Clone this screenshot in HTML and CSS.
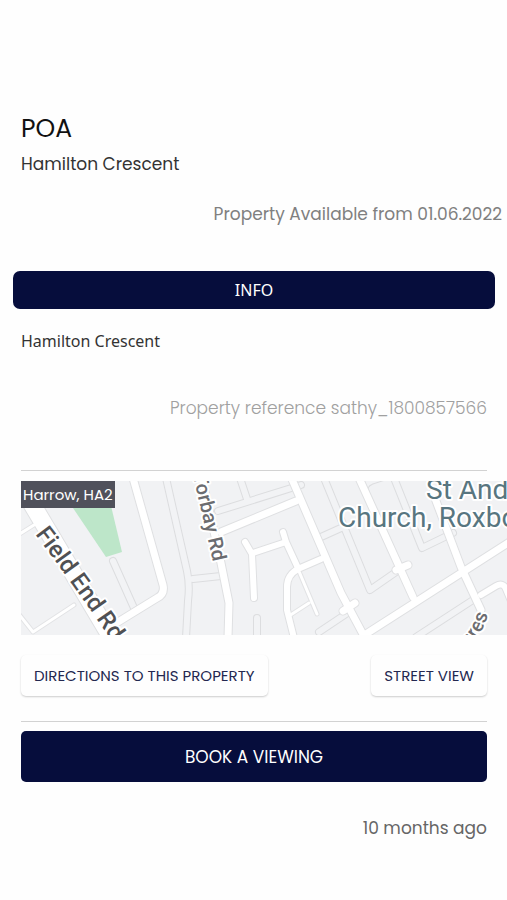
FILE: index.html
```
<!DOCTYPE html>
<html lang="en">
<head>
    <meta charset="UTF-8">
    <meta name="viewport" content="width=device-width, initial-scale=1.0">
    <title>Hamilton Crescent</title>
    <link rel="stylesheet" href="styles.css">
</head>
<body>
    <main class="property">
        <h1 class="price">POA</h1>
        <p class="address">Hamilton Crescent</p>
        <p class="available">Property Available from 01.06.2022</p>

        <button type="button" class="info-btn">INFO</button>
        <p class="description">Hamilton Crescent</p>
        <p class="reference">Property reference sathy_1800857566</p>

        <hr>

        <div class="map">
            <span class="map-label">Harrow, HA2</span>
            <svg class="map-img" viewBox="0 0 487 154" preserveAspectRatio="xMinYMin slice" role="img" aria-label="Map of Harrow, HA2">
                <defs>
                    <!-- side streets -->
                    <g id="minor">
                        <path d="M145 -3L166 90Q169 104 167 120L165 157M172 98L200 95"/>
                        <path d="M92 80L113 127M197 30L280 4M226 18L219 -3"/>
                        <path d="M236 137V157M298 151L325 133M300 56L320 47M303 -3L349 109L375 91"/>
                        <path d="M373 -3L401 67L432 52M395 156L455 117M345 12Q341 4 350 0L362 -4"/>
                    </g>
                    <!-- main roads -->
                    <g id="major">
                        <path d="M112 -3L142 104Q144 113 136 117L97 141"/>
                        <path d="M181 -3L200 82L208 122L207 157M200 51L275 20"/>
                        <path d="M270 -4L320 112L344 157M338 -3L392 116M345 153L490 60"/>
                        <path d="M412 12L440 86L460 129M375 89L387 84M322 130L334 122"/>
                    </g>
                    <g id="medium">
                        <path d="M262 51L265 61L277 87M232 72L265 61M224 61L231 73L233 117"/>
                        <path d="M300 78L277 88Q266 94 266 106V129L273 157"/>
                        <path d="M460 114L475 105Q482 101 485 108L490 120"/>
                    </g>
                    <g id="lanes">
                        <path d="M277 88L296 133M288 122L268 135M53 124L12 151L-3 132M-3 54L13 44"/>
                    </g>
                    <path id="field-end" d="M14 53Q51 102 93 163L150 246"/>
                    <path id="acres" d="M424 178Q458 168 467 133"/>
                </defs>

                <rect width="487" height="154" class="land"/>
                <path d="M40 8L86 8L101 71L85 76L52 27Z" class="park"/>
                <use href="#minor" class="road minor-edge"/>
                <use href="#minor" class="road minor-fill"/>
                <use href="#lanes" class="road lane-edge"/>
                <use href="#medium" class="road medium-edge"/>
                <use href="#major" class="road major-edge"/>
                <path d="M2 8L93 161" class="road trunk-edge"/>
                <use href="#lanes" class="road lane-fill"/>
                <use href="#medium" class="road medium-fill"/>
                <use href="#major" class="road major-fill"/>
                <path d="M2 8L93 161" class="road trunk-fill"/>

                <text class="street street-lg"><textPath href="#field-end">Field End Rd</textPath></text>
                <text class="street" text-anchor="end" transform="translate(192 81) rotate(77)">Torbay Rd</text>
                <text class="street" text-anchor="end"><textPath href="#acres" startOffset="100%">Acres</textPath></text>
                <text class="place" x="405" y="18">St Andrew's</text>
                <text class="place" x="317" y="46">Church, Roxbourne</text>
            </svg>
        </div>

        <div class="map-actions">
            <button type="button" class="link-btn">DIRECTIONS TO THIS PROPERTY</button>
            <button type="button" class="link-btn">STREET VIEW</button>
        </div>

        <hr>

        <button type="button" class="book-btn">BOOK A VIEWING</button>
        <p class="posted">10 months ago</p>
    </main>
</body>
</html>
```
FILE: styles.css
```
* {
    box-sizing: border-box;
}

body {
    font-family: 'Poppins', 'Inter', sans-serif;
    margin: 0;
    background-color: #fefefe;
    color: #222;
    overflow-x: hidden;
}

.property {
    padding: 113px 20px 40px 21px;
    font-size: 17px;
    line-height: 24px;
}

h1, p {
    margin: 0;
}

.price {
    font-size: 25px;
    font-weight: 400;
    line-height: 32px;
    color: #111;
}

.address {
    margin-top: 7px;
    color: #333;
}

.available {
    margin: 26px -15px 0 0;
    text-align: right;
    color: #808080;
}

button {
    font-family: inherit;
    border: none;
    cursor: pointer;
}

.info-btn {
    display: block;
    width: calc(100% + 16px);
    height: 38px;
    margin: 45px -8px 0;
    border-radius: 7px;
    background-color: #060d3c;
    color: #fff;
    font-family: 'Segoe UI', 'Noto Sans', sans-serif;
    font-size: 16px;
}

.description {
    margin-top: 20px;
    font-family: 'Segoe UI', 'Noto Sans', sans-serif;
    font-size: 16px;
    color: #333;
}

.reference {
    margin-top: 43px;
    text-align: right;
    font-weight: 300;
    color: #a0a0a0;
}

hr {
    margin: 50px 0 10px;
    border: none;
    border-top: 1px solid #d2d2d2;
}

.map {
    position: relative;
    margin-right: -20px;
}

.map-img {
    display: block;
    width: 100%;
    height: 154px;
}

.map-label {
    position: absolute;
    top: 0;
    left: 0;
    padding: 0 2px;
    background-color: #50515b;
    color: #fff;
    font-size: 15px;
    line-height: 27px;
}

.land {
    fill: #f1f2f4;
}

.park {
    fill: #bde6c9;
}

.road {
    fill: none;
    stroke-linecap: round;
    stroke-linejoin: round;
}

.minor-edge {
    stroke: #dcdddf;
    stroke-width: 8px;
}

.minor-fill {
    stroke: #f2f3f5;
    stroke-width: 6px;
}

.lane-edge {
    stroke: #e2e3e5;
    stroke-width: 5px;
}

.lane-fill {
    stroke: #fff;
    stroke-width: 3px;
}

.medium-edge {
    stroke: #dfe0e2;
    stroke-width: 8px;
}

.medium-fill {
    stroke: #fff;
    stroke-width: 6px;
}

.major-edge {
    stroke: #dfe0e2;
    stroke-width: 9px;
}

.major-fill {
    stroke: #fff;
    stroke-width: 7px;
}

.trunk-edge {
    stroke: #dfe0e2;
    stroke-width: 19px;
}

.trunk-fill {
    stroke: #fff;
    stroke-width: 17px;
}

.street, .place {
    font-family: Roboto, sans-serif;
    stroke: #fff;
    stroke-width: 4px;
    stroke-linejoin: round;
    paint-order: stroke;
}

.street {
    font-size: 20px;
    font-weight: 500;
    fill: #6b6c70;
}

.street-lg {
    font-size: 24px;
    fill: #505154;
}

.place {
    font-size: 28px;
    fill: #587680;
}

.map-actions {
    display: flex;
    justify-content: space-between;
    margin-top: 20px;
}

.link-btn {
    height: 41px;
    padding: 0 13px;
    border-radius: 5px;
    background-color: #fefefe;
    box-shadow: 0 1px 2px rgba(0, 0, 0, 0.2);
    color: #242850;
    font-size: 15px;
}

.map-actions + hr {
    margin: 25px 0 9px;
}

.book-btn {
    display: block;
    width: 100%;
    height: 51px;
    border-radius: 5px;
    background-color: #060d3c;
    color: #fff;
    font-size: 17px;
}

.posted {
    margin-top: 34px;
    text-align: right;
    color: #666;
}
```
